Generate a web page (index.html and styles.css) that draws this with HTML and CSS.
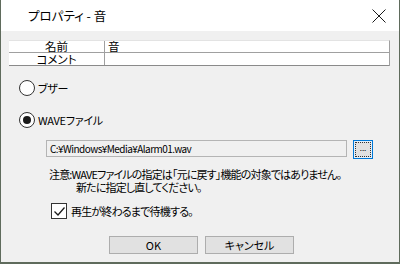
FILE: index.html
```html
<!DOCTYPE html>
<html lang="ja">
<head>
    <meta charset="UTF-8">
    <title>プロパティ - 音</title>
    <link rel="stylesheet" href="styles.css">
</head>
<body>
  <div class="window">
    <div class="titlebar">
      <span class="title">プロパティ - 音</span>
      <svg class="close" width="14" height="14" viewBox="0 0 14 14">
        <path d="M0.5 0.5 L13.5 13.5 M13.5 0.5 L0.5 13.5" stroke="#1a1a1a" stroke-width="1" fill="none"/>
      </svg>
    </div>
    <div class="content">
      <div class="info">
        <div class="row">
          <div class="key">名前</div>
          <div class="val">音</div>
        </div>
        <div class="row last">
          <div class="key">コメント</div>
          <div class="val"></div>
        </div>
      </div>

      <div class="radio">
        <span class="circle"></span>
        <span class="label">ブザー</span>
      </div>
      <div class="radio second">
        <span class="circle on"></span>
        <span class="label">WAVEファイル</span>
      </div>

      <div class="filerow">
        <div class="path">C:¥Windows¥Media¥Alarm01.wav</div>
        <div class="browse"><span>...</span></div>
      </div>

      <div class="note">
        <div class="line">注意:WAVEファイルの指定は「元に戻す」機能の対象ではありません。</div>
        <div class="line indent">新たに指定し直してください。</div>
      </div>

      <div class="check">
        <span class="box">
          <svg width="13" height="13" viewBox="0 0 13 13">
            <path d="M1.5 6.5 L5 10 L11.5 2.5" stroke="#1a1a1a" stroke-width="1.3" fill="none"/>
          </svg>
        </span>
        <span class="label">再生が終わるまで待機する。</span>
      </div>

      <div class="buttons">
        <div class="btn">OK</div>
        <div class="btn">キャンセル</div>
      </div>
    </div>
  </div>
</body>
</html>
```
FILE: styles.css
```css
html, body {
  margin: 0;
  padding: 0;
}
body {
  font-family: "Noto Sans CJK JP", "Noto Sans", sans-serif;
  font-size: 11px;
  color: #000;
  font-feature-settings: "palt";
}
.window {
  width: 400px;
  height: 264px;
  box-sizing: border-box;
  background: #f0f0f0;
  border: 1px solid #5f6b5c;
  border-top: 0;
  border-bottom-width: 2px;
  display: flex;
  flex-direction: column;
}
.titlebar {
  height: 31px;
  background: #fff;
  display: flex;
  align-items: center;
  justify-content: space-between;
  padding: 0 13px 0 27px;
}
.title {
  font-size: 12.5px;
  color: #000;
}
.close {
  display: block;
}
.content {
  display: flex;
  flex-direction: column;
  padding: 9px 9px 0 8px;
}
.info {
  background: #fff;
  border-top: 1px solid #e3e3e3;
  border-right: 1px solid #a0a0a0;
}
.row {
  display: flex;
  height: 11px;
  line-height: 11px;
  border-bottom: 1px solid #a0a0a0;
}
.row.last {
  height: 12px;
  line-height: 12px;
  border-bottom-color: #8a8a8a;
}
.key,
.val {
  font-size: 11.5px;
}
.key {
  width: 95px;
  text-align: center;
  border-right: 1px solid #a0a0a0;
}
.val {
  padding-left: 3px;
}
.radio {
  display: flex;
  align-items: center;
  margin: 14px 0 0 10px;
  height: 16px;
}
.radio.second {
  margin-top: 16px;
}
.circle {
  width: 14px;
  height: 14px;
  border: 1px solid #333;
  border-radius: 50%;
  background: #fff;
  display: flex;
  align-items: center;
  justify-content: center;
}
.circle.on::after {
  content: "";
  width: 8px;
  height: 8px;
  border-radius: 50%;
  background: #1a1a1a;
}
.radio .label {
  margin-left: 3px;
  letter-spacing: -0.3px;
}
.filerow {
  display: flex;
  margin: 12px 0 0 37px;
  height: 17px;
}
.path {
  width: 296px;
  height: 15px;
  border: 1px solid #b4b4b4;
  background: #f0f0f0;
  padding-left: 3px;
  font-size: 10px;
  line-height: 15px;
  letter-spacing: -0.55px;
}
.browse {
  margin-left: 6px;
  width: 16px;
  height: 15px;
  border: 1px solid #0078d7;
  background: #e5f1fb;
  padding: 1px;
  box-sizing: content-box;
  display: flex;
}
.browse span {
  flex: 1;
  border: 1px dotted #333;
  background: #e1e1e1;
  font-size: 8px;
  line-height: 10px;
  text-align: center;
}
.note {
  margin: 11px 0 0 40px;
  letter-spacing: -0.85px;
  line-height: 13px;
}
.note .indent {
  padding-left: 27px;
}
.check {
  display: flex;
  align-items: center;
  margin: 9px 0 0 42px;
  height: 16px;
}
.box {
  width: 14px;
  height: 14px;
  border: 1px solid #333;
  background: #fff;
  display: flex;
  align-items: center;
  justify-content: center;
}
.check .label {
  margin-left: 4px;
  letter-spacing: -0.8px;
}
.buttons {
  display: flex;
  gap: 7px;
  margin: 17px 0 0 100px;
}
.btn {
  width: 87px;
  height: 16px;
  border: 1px solid #adadad;
  background: #e1e1e1;
  text-align: center;
  line-height: 16px;
}
```
